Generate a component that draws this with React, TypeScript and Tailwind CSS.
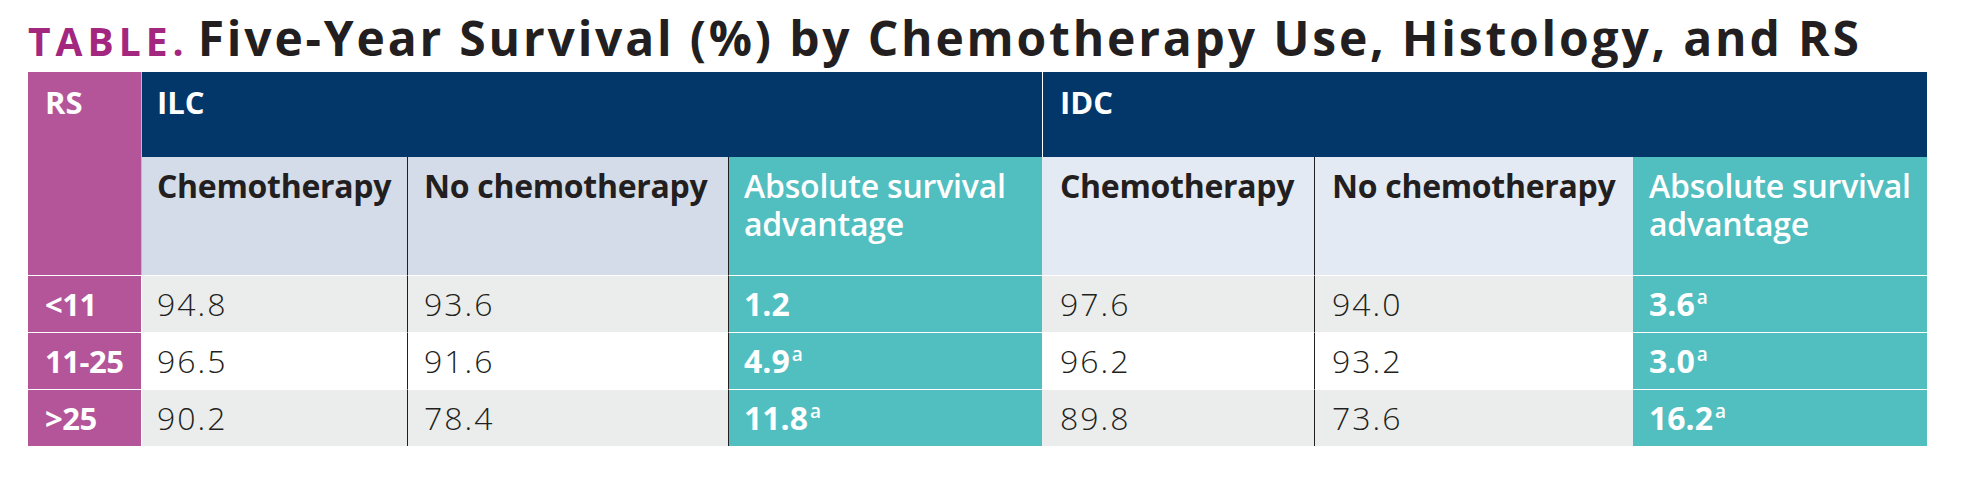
import React from "react"

const rows = [
  { rs: "<11", ilc: ["94.8", "93.6"], ilcAdv: "1.2", ilcSig: false, idc: ["97.6", "94.0"], idcAdv: "3.6", idcSig: true },
  { rs: "11-25", ilc: ["96.5", "91.6"], ilcAdv: "4.9", ilcSig: true, idc: ["96.2", "93.2"], idcAdv: "3.0", idcSig: true },
  { rs: ">25", ilc: ["90.2", "78.4"], ilcAdv: "11.8", ilcSig: true, idc: ["89.8", "73.6"], idcAdv: "16.2", idcSig: true },
]

function Adv({ value, sig }: { value: string; sig: boolean }) {
  return (
    <span className="font-bold">
      {value}
      {sig && <sup className="ml-[2px] align-top text-[19px] leading-[19px] font-semibold relative top-[3px]">a</sup>}
    </span>
  )
}

export default function App() {
  return (
    <div
      className="w-[1974px] h-[486px] bg-white text-[#231f20] px-[28px] pt-[14px]"
      style={{ fontFamily: '"Open Sans", "Noto Sans", sans-serif' }}
    >
      {/* Title */}
      <h1 className="h-[48px] flex items-baseline font-bold whitespace-nowrap overflow-visible">
        <span className="text-[39px] leading-[48px] text-[#a3267f] tracking-[5px]">TABLE.</span>
        <span className="ml-[9px] text-[48px] leading-[48px] tracking-[2.8px]">
          Five-Year Survival (%) by Chemotherapy Use, Histology, and RS
        </span>
      </h1>

      {/* Table */}
      <div className="mt-[10px] grid grid-cols-[114px_265px_321px_314px_272px_319px_294px] grid-rows-[85px_118px_57px_57px_57px] text-[32px] leading-[38px]">
        {/* header row */}
        <div className="row-span-2 bg-[#b45499] border-r border-white/50 pl-[17px] pt-[12px] text-white font-bold text-[31px] leading-[36px]">
          RS
        </div>
        <div className="col-span-3 bg-[#03376a] pl-[15px] pt-[12px] text-white font-bold text-[31px] leading-[36px]">
          ILC
        </div>
        <div className="col-span-3 bg-[#03376a] border-l border-white pl-[17px] pt-[12px] text-white font-bold text-[31px] leading-[36px]">
          IDC
        </div>

        {/* sub header */}
        <div className="bg-[#d4dce9] pl-[15px] pt-[10px] font-bold tracking-[-0.3px]">Chemotherapy</div>
        <div className="bg-[#d4dce9] border-l border-[#231f20] pl-[16px] pt-[10px] font-bold tracking-[-0.3px]">No chemotherapy</div>
        <div className="bg-[#51bec0] border-l border-[#231f20] pl-[15px] pt-[10px] text-white font-semibold tracking-[-0.2px]">
          Absolute survival
          <br />
          advantage
        </div>
        <div className="bg-[#e3eaf3] pl-[18px] pt-[10px] font-bold tracking-[-0.3px]">Chemotherapy</div>
        <div className="bg-[#e3eaf3] border-l border-[#231f20] pl-[17px] pt-[10px] font-bold tracking-[-0.3px]">No chemotherapy</div>
        <div className="bg-[#51bec0] pl-[16px] pt-[10px] text-white font-semibold tracking-[-0.2px]">
          Absolute survival
          <br />
          advantage
        </div>

        {/* data rows */}
        {rows.map((r, i) => {
          const bg = i === 1 ? "bg-white" : "bg-[#ebedec]"
          return (
            <React.Fragment key={r.rs}>
              <div className="bg-[#b45499] border-t border-r border-white pl-[17px] flex items-center text-white font-bold text-[31px] tracking-[-0.5px]">
                {r.rs}
              </div>
              <div className={`${bg} border-t border-white pl-[15px] flex items-center font-light tracking-[2px]`}>{r.ilc[0]}</div>
              <div className={`${bg} border-t border-t-white border-l border-l-[#231f20] pl-[16px] flex items-center font-light tracking-[2px]`}>
                {r.ilc[1]}
              </div>
              <div className="bg-[#51bec0] border-t border-t-white border-l border-l-[#231f20] pl-[15px] flex items-center text-white">
                <Adv value={r.ilcAdv} sig={r.ilcSig} />
              </div>
              <div className={`${bg} border-t border-white pl-[18px] flex items-center font-light tracking-[2px]`}>{r.idc[0]}</div>
              <div className={`${bg} border-t border-t-white border-l border-l-[#231f20] pl-[17px] flex items-center font-light tracking-[2px]`}>
                {r.idc[1]}
              </div>
              <div className="bg-[#51bec0] border-t border-white pl-[16px] flex items-center text-white">
                <Adv value={r.idcAdv} sig={r.idcSig} />
              </div>
            </React.Fragment>
          )
        })}
      </div>
    </div>
  )
}
